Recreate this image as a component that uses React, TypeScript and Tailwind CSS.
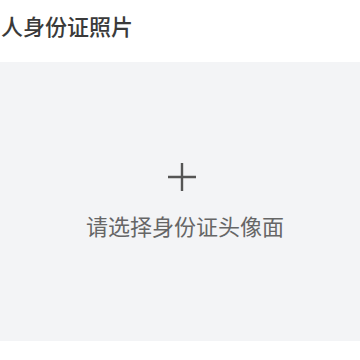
export default function App() {
  return (
    <div
      className="h-[360px] w-[360px] overflow-hidden bg-white"
      style={{ fontFamily: '"Noto Sans CJK SC", "Noto Sans", sans-serif' }}
    >
      <div className="h-[62px] pl-[1px] pt-[12px] text-[22px] font-medium leading-[26px] text-[#3a3a3a]">
        人身份证照片
      </div>
      <div className="flex h-[279px] w-full flex-col items-center justify-center bg-[#f3f4f6]">
        <svg width="28" height="28" viewBox="0 0 28 28" className="ml-[3px] mt-[-2px]">
          <path d="M14 0V28M0 14H28" stroke="#555555" strokeWidth="2.4" fill="none" />
        </svg>
        <div className="mt-[21px] pl-[10px] text-[22px] leading-[26px] text-[#666666]">
          请选择身份证头像面
        </div>
      </div>
    </div>
  );
}
